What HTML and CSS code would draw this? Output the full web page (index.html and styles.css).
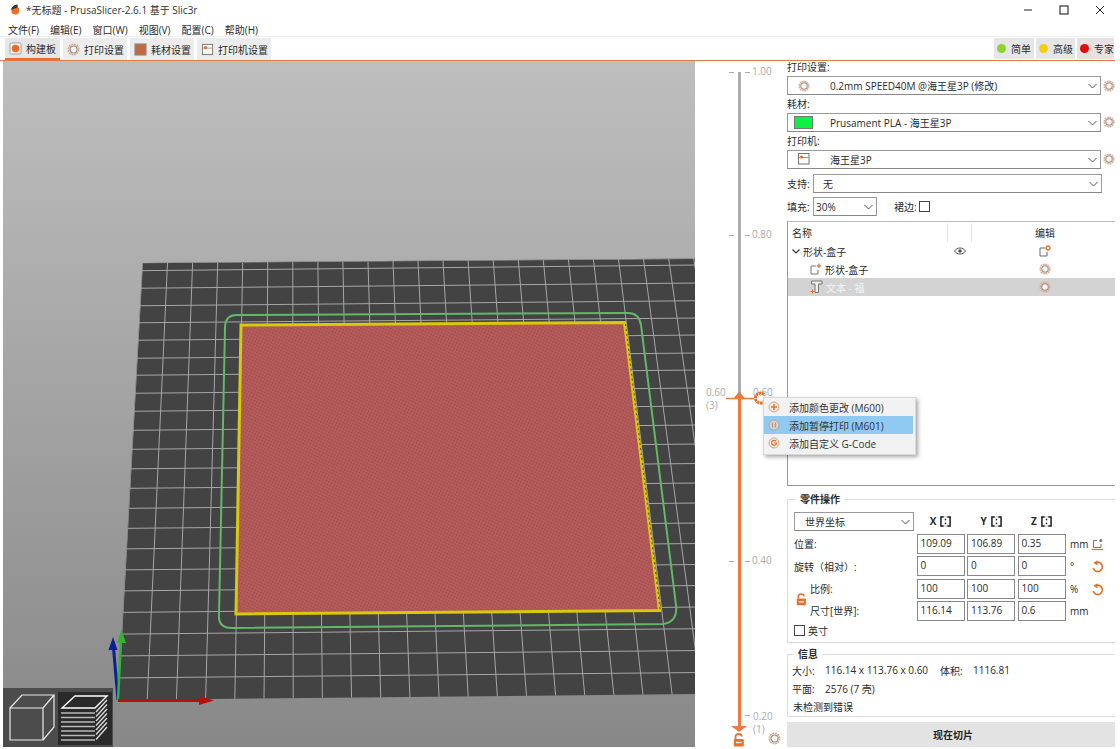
FILE: index.html
```html
<!DOCTYPE html>
<html lang="zh-CN">
<head>
<meta charset="utf-8">
<title>PrusaSlicer</title>
<link rel="stylesheet" href="styles.css">
</head>
<body>
<svg class="defs" width="0" height="0" aria-hidden="true">
  <defs>
    <symbol id="gear" viewBox="0 0 14 14">
      <circle cx="7" cy="7" r="5.600" fill="none" stroke="#e2ab8a" stroke-width="1.800" stroke-dasharray="2.200 0.700"/>
      <circle cx="7" cy="7" r="3.800" fill="#f4f4f4" stroke="#8f8f8f" stroke-width="1.200"/>
    </symbol>
    <symbol id="lock" viewBox="0 0 12 14">
      <path d="M2.500 6V3.600C2.500 2 3.800 1 5.400 1S8.600 2 8.600 3.600" fill="none" stroke="#e8702a" stroke-width="1.800"/>
      <rect x="0.800" y="6" width="10" height="7.400" rx="1" fill="#e8702a"/>
      <rect x="3" y="8.800" width="5.600" height="1.400" fill="#fff"/>
    </symbol>
    <symbol id="reset" viewBox="0 0 14 14">
      <path d="M4.500 3.200A5 5 0 1 1 2.400 8.600" fill="none" stroke="#e8702a" stroke-width="1.800"/>
      <path d="M7 0.200L7 6L2.600 3Z" fill="#e8702a"/>
    </symbol>
    <symbol id="bracket" viewBox="0 0 12 12">
      <rect x="1" y="1" width="10" height="10" fill="none" stroke="#bbb"/>
      <path d="M4 1H1V11H4M8 1H11V11H8" fill="none" stroke="#222" stroke-width="1.600"/>
      <rect x="5.200" y="3" width="1.600" height="1.800" fill="#222"/>
      <rect x="5.200" y="7.200" width="1.600" height="1.800" fill="#222"/>
    </symbol>
  </defs>
</svg>
<div class="app">
  <header class="titlebar">
    <svg class="logo" width="9" height="11" viewBox="0 0 9 11"><circle cx="4.300" cy="6.500" r="4" fill="#e8702a"/><path d="M6.500 0.500C3 0.800 0.500 2.800 0.300 6C2 4.800 5 4.500 6.800 3Z" fill="#333"/></svg>
    <span class="title">*无标题 - PrusaSlicer-2.6.1 基于 Slic3r</span>
    <div class="winbtns">
      <svg width="10" height="10" viewBox="0 0 10 10"><path d="M1 5H9" stroke="#222"/></svg>
      <svg width="10" height="10" viewBox="0 0 10 10"><rect x="1" y="1" width="8" height="8" fill="none" stroke="#222" stroke-width="1.100"/></svg>
      <svg width="10" height="10" viewBox="0 0 10 10"><path d="M1 1L9 9M9 1L1 9" stroke="#222"/></svg>
    </div>
  </header>
  <nav class="menubar">
    <span>文件(F)</span><span>编辑(E)</span><span>窗口(W)</span><span>视图(V)</span><span>配置(C)</span><span>帮助(H)</span>
  </nav>
  <div class="tabbar">
    <div class="tab active">
      <svg width="13" height="13" viewBox="0 0 14 14"><rect x="1" y="1" width="12" height="12" rx="1.500" fill="#f4f4f4" stroke="#999"/><circle cx="7" cy="7" r="4" fill="#ee6a24"/></svg>
      <span>构建板</span>
    </div>
    <div class="tab">
      <svg width="13" height="13"><use href="#gear"/></svg>
      <span>打印设置</span>
    </div>
    <div class="tab">
      <svg width="13" height="13" viewBox="0 0 14 14"><rect x="1" y="1" width="12" height="12" fill="#bd6c44" stroke="#8a8a8a"/></svg>
      <span>耗材设置</span>
    </div>
    <div class="tab">
      <svg width="13" height="13" viewBox="0 0 14 14"><rect x="1.500" y="1.500" width="11" height="11" fill="#fafafa" stroke="#777"/><path d="M2 5.500H12" stroke="#999"/><circle cx="4.800" cy="5" r="1.700" fill="#e8702a"/></svg>
      <span>打印机设置</span>
    </div>
    <div class="modes">
      <div class="mode"><i class="dot green"></i><span>简单</span></div>
      <div class="mode"><i class="dot yellow"></i><span>高级</span></div>
      <div class="mode current"><i class="dot red"></i><span>专家</span></div>
    </div>
  </div>
  <main class="main">
    <section class="canvas">
      <svg class="scene" width="692" height="686" viewBox="3 61 692 686">
        <defs>
          <linearGradient id="bg" x1="0" y1="0" x2="0" y2="1">
            <stop offset="0" stop-color="#bebebe"/>
            <stop offset="1" stop-color="#888"/>
          </linearGradient>
          <clipPath id="plateclip"><polygon points="142.500,263 700,258.500 700,694 118,700"/></clipPath>
          <pattern id="weave" width="3" height="3" patternUnits="userSpaceOnUse" patternTransform="rotate(25)">
            <rect width="3" height="3" fill="#b65c5b"/>
            <rect width="1.500" height="1.500" fill="#9c4c4c"/>
          </pattern>
        </defs>
        <rect x="3" y="61" width="692" height="686" fill="url(#bg)"/>
        <polygon points="142.500,263 700,258.500 700,694 118,700" fill="#434343"/>
        <g clip-path="url(#plateclip)" stroke="#a6a6a6" stroke-width="1" fill="none">
          <path d="M142.500 263L118 700M167.500 263L147.200 700M192.600 263L176.400 700M217.700 263L205.600 700M242.700 263L234.800 700M267.800 262L264 700M292.800 262L293.200 700M317.900 262L322.400 700M342.900 262L351.600 700M368 262L380.800 700M393 261L410 700M418 261L439.200 700M443 261L468.400 700M468 260L497.600 700M493.200 260L526.800 700M518.300 260L556 700M543.300 260L585.200 700M568.400 259L614.400 700M593.400 259L643.600 700M618.500 259L672.800 700M643.500 259L702 700M668.600 258L731.200 700M693.600 258L760.400 700"/>
          <path d="M110 263L700 258.500M110 271L700 265M110 288.500L700 283M110 306L700 300.700M110 323L700 318M110 340.500L700 335M110 358.500L700 353M110 375.500L700 370M110 393.500L700 388M110 411.500L700 406M110 430.500L700 425M110 449.500L700 444M110 469L700 463.500M110 488.500L700 483M110 508.500L700 503M110 528.500L700 523M110 549L700 543.500M110 570L700 564.500M110 591L700 585.500M110 612.500L700 607M110 634.200L700 628.700M110 656L700 650.500M110 678L700 672.500"/>
        </g>
        <path d="M237 315L628 313Q639 313 641 325L676 605Q678 622 663 624L232 628Q218 628 219 615L225 328Q225 315 237 315Z" fill="none" stroke="#63b768" stroke-width="2"/>
        <polygon points="241,325 624.500,322.500 659.500,610.500 236,614" fill="url(#weave)" stroke="#d8c90c" stroke-width="3" stroke-linejoin="miter"/>
        <path d="M625.500 324L660 609" stroke="#5c5410" stroke-width="1" stroke-dasharray="2 3"/>
        <path d="M118 700L113 642" stroke="#0b1f96" stroke-width="3"/>
        <polygon points="113,637 108.500,650 117.500,650" fill="#0b1f96"/>
        <path d="M118 700L121 638" stroke="#2fb52f" stroke-width="2.500"/>
        <polygon points="121.500,630 117,643 126,643" fill="#2fb52f"/>
        <path d="M118 700.500H205" stroke="#b50f0f" stroke-width="3"/>
        <polygon points="214,700.500 199,696 199,705" fill="#b50f0f"/>
        <rect x="2" y="688" width="111" height="59" fill="#4c4c4c"/>
        <rect x="58" y="692" width="54" height="53" fill="#2a2a2a"/>
        <g fill="none" stroke="#e8e8e8" stroke-width="1.200">
          <path d="M10 708H43V740H10ZM10 708L22 695H54L43 708M54 695V727L43 740"/>
          <path d="M62 708L75 696H107L95 708Z" stroke="#fff" stroke-width="1.400"/>
        </g>
        <path d="M61 713H95M61 717.500H95M61 722H95M61 726.500H95M61 731H95M61 735.500H95M61 740H95" stroke="#b8b8b8" stroke-width="1.400"/>
        <path d="M96 712L107 700M96 716.500L107 704.500M96 721L107 709M96 725.500L107 713.500M96 730L107 718M96 734.500L107 722.500M96 739.500L107 727" stroke="#dcdcdc" stroke-width="1.300"/>
      </svg>
    </section>
    <section class="slider">
      <div class="track grey"></div>
      <div class="track orange"></div>
      <span class="tick t100"></span><span class="tick t100 r"></span>
      <span class="tick t80"></span><span class="tick t80 r"></span>
      <span class="tick t40"></span><span class="tick t40 r"></span>
      <span class="tick t20"></span>
      <span class="val v100">1.00</span>
      <span class="val v80">0.80</span>
      <span class="val v60">0.60<br>(3)</span>
      <span class="val v60b">0.60</span>
      <span class="val v40">0.40</span>
      <span class="val v20">0.20<br>(1)</span>
      <svg class="thumb top" width="34" height="8" viewBox="0 0 34 8"><path d="M4 6.500H32M13 5.500L21.500 5.500L17.300 0.500Z" stroke="#ee7a3f" stroke-width="1.300" fill="#ee7a3f"/></svg>
      <svg class="addgear" width="14" height="14" viewBox="0 0 14 14"><path d="M11 3.500A5 5 0 1 0 11 10.500" fill="none" stroke="#e8702a" stroke-width="3" stroke-dasharray="2.500 0.600"/></svg>
      <svg class="thumb bottom" width="20" height="6" viewBox="0 0 20 6"><path d="M2 0H18L10 6Z" fill="#ee7a3f"/></svg>
      <svg class="slock" width="12" height="14"><use href="#lock"/></svg>
      <svg class="sgear" width="13" height="13"><use href="#gear"/></svg>
      <div class="ctx">
        <div class="ctx-item">
          <svg width="12" height="12" viewBox="0 0 12 12"><circle cx="6" cy="6" r="5" fill="#f4e7dc" stroke="#cfa78b"/><path d="M6 3V9M3 6H9" stroke="#e8702a" stroke-width="1.500"/></svg>
          <span>添加颜色更改 (M600)</span>
        </div>
        <div class="ctx-item hot">
          <svg width="12" height="12" viewBox="0 0 12 12"><circle cx="6" cy="6" r="5" fill="#cfd8df" stroke="#b0a79e"/><path d="M4.500 3.500V8.500M7.500 3.500V8.500" stroke="#d88a5c" stroke-width="1.300"/></svg>
          <span>添加暂停打印 (M601)</span>
        </div>
        <div class="ctx-item">
          <svg width="12" height="12" viewBox="0 0 12 12"><circle cx="6" cy="6" r="5" fill="#f4e7dc" stroke="#cfa78b"/><path d="M8 4.200A2.500 2.500 0 1 0 8.300 7V6H6.300" fill="none" stroke="#e8702a" stroke-width="1.200"/></svg>
          <span>添加自定义 G-Code</span>
        </div>
      </div>
    </section>
    <aside class="side">
      <div class="preset">
        <label class="plabel">打印设置:</label>
        <div class="prow">
          <div class="combo big">
            <span class="cicon"><svg width="12" height="12"><use href="#gear"/></svg></span>
            <span class="ctext">0.2mm SPEED40M @海王星3P (修改)</span>
            <svg class="chev" width="9" height="6" viewBox="0 0 9 6"><path d="M0.500 1L4.500 5L8.500 1" fill="none" stroke="#555"/></svg>
          </div>
          <svg width="12" height="12"><use href="#gear"/></svg>
        </div>
      </div>
      <div class="preset">
        <label class="plabel">耗材:</label>
        <div class="prow">
          <div class="combo big">
            <span class="cicon"><i class="swatch"></i></span>
            <span class="ctext">Prusament PLA - 海王星3P</span>
            <svg class="chev" width="9" height="6" viewBox="0 0 9 6"><path d="M0.500 1L4.500 5L8.500 1" fill="none" stroke="#555"/></svg>
          </div>
          <svg width="12" height="12"><use href="#gear"/></svg>
        </div>
      </div>
      <div class="preset">
        <label class="plabel">打印机:</label>
        <div class="prow">
          <div class="combo big">
            <span class="cicon"><svg width="12" height="12" viewBox="0 0 12 12"><rect x="0.500" y="0.500" width="10.500" height="10.500" fill="#fafafa" stroke="#777"/><path d="M1 4.500H11" stroke="#999"/><circle cx="3.500" cy="4" r="1.600" fill="#e8702a"/></svg></span>
            <span class="ctext">海王星3P</span>
            <svg class="chev" width="9" height="6" viewBox="0 0 9 6"><path d="M0.500 1L4.500 5L8.500 1" fill="none" stroke="#555"/></svg>
          </div>
          <svg width="12" height="12"><use href="#gear"/></svg>
        </div>
      </div>
      <div class="optrow support">
        <span class="optlabel">支持:</span>
        <div class="combo wide">
          <span class="ctext pad">无</span>
          <svg class="chev" width="9" height="6" viewBox="0 0 9 6"><path d="M0.500 1L4.500 5L8.500 1" fill="none" stroke="#555"/></svg>
        </div>
      </div>
      <div class="optrow fill">
        <span class="optlabel">填充:</span>
        <div class="combo small">
          <span class="ctext">30%</span>
          <svg class="chev" width="9" height="6" viewBox="0 0 9 6"><path d="M0.500 1L4.500 5L8.500 1" fill="none" stroke="#555"/></svg>
        </div>
        <span class="brim">裙边:</span>
        <i class="check"></i>
      </div>
      <div class="objlist">
        <div class="objhead">
          <span class="cname">名称</span><span class="ceye"></span><span class="cedit">编辑</span>
        </div>
        <div class="objrow">
          <span class="cname">
            <svg width="8" height="5" viewBox="0 0 8 5"><path d="M0.500 0.500L4 4L7.500 0.500" fill="none" stroke="#333" stroke-width="1.200"/></svg>
            <span>形状-盒子</span>
          </span>
          <span class="ceye"><svg width="12" height="8" viewBox="0 0 12 8"><path d="M0.500 4C3 0 9 0 11.500 4C9 8 3 8 0.500 4Z" fill="none" stroke="#555"/><circle cx="6" cy="4" r="1.800" fill="#555"/></svg></span>
          <span class="cedit"><svg width="12" height="12" viewBox="0 0 12 12"><path d="M6 3H1V11H8V7" fill="none" stroke="#666"/><circle cx="9" cy="3" r="2" fill="none" stroke="#e8702a" stroke-width="1.300"/></svg></span>
        </div>
        <div class="objrow child">
          <span class="cname">
            <svg width="12" height="12" viewBox="0 0 12 12"><path d="M6 3H1V11H8V7" fill="none" stroke="#777"/><path d="M9 0.500V5M6.800 2.800H11.200" stroke="#e8702a" stroke-width="1.200"/></svg>
            <span>形状-盒子</span>
          </span>
          <span class="ceye"></span>
          <span class="cedit"><svg width="12" height="12"><use href="#gear"/></svg></span>
        </div>
        <div class="objrow child sel">
          <span class="cname">
            <svg width="13" height="14" viewBox="0 0 13 14"><path d="M1.500 1H12V4H8.500V12.500H5V4H1.500Z" fill="#eee" stroke="#777"/><path d="M2.500 9.500V13.500M0.500 11.500H4.500" stroke="#e8702a"/></svg>
            <span>文本 - 福</span>
          </span>
          <span class="ceye"></span>
          <span class="cedit"><svg width="12" height="12"><use href="#gear"/></svg></span>
        </div>
      </div>
      <fieldset class="group manip">
        <legend>零件操作</legend>
        <div class="mgrid">
          <div class="combo coord">
            <span class="ctext pad2">世界坐标</span>
            <svg class="chev" width="9" height="6" viewBox="0 0 9 6"><path d="M0.500 1L4.500 5L8.500 1" fill="none" stroke="#555"/></svg>
          </div>
          <div class="axis"><b>X</b><svg width="11" height="11"><use href="#bracket"/></svg></div>
          <div class="axis"><b>Y</b><svg width="11" height="11"><use href="#bracket"/></svg></div>
          <div class="axis"><b>Z</b><svg width="11" height="11"><use href="#bracket"/></svg></div>
          <div></div>

          <span class="mlabel">位置:</span>
          <div class="inp">109.09</div><div class="inp">106.89</div><div class="inp">0.35</div>
          <div class="unit"><span>mm</span><svg width="13" height="13" viewBox="0 0 13 13"><path d="M6 2.500H2.500V9.500H10V6" fill="none" stroke="#777"/><circle cx="9.800" cy="2.500" r="1.500" fill="#777"/><path d="M0.500 11.500H12" stroke="#e8702a" stroke-width="1.200"/></svg></div>

          <span class="mlabel">旋转（相对）:</span>
          <div class="inp">0</div><div class="inp">0</div><div class="inp">0</div>
          <div class="unit"><span>°</span><svg width="13" height="13"><use href="#reset"/></svg></div>

          <div class="lockcell">
            <svg width="11" height="13"><use href="#lock"/></svg>
            <div class="locklabels"><span>比例:</span><span>尺寸[世界]:</span></div>
          </div>
          <div class="inp">100</div><div class="inp">100</div><div class="inp">100</div>
          <div class="unit"><span>%</span><svg width="13" height="13"><use href="#reset"/></svg></div>

          <div class="inp">116.14</div><div class="inp">113.76</div><div class="inp">0.6</div>
          <div class="unit"><span>mm</span></div>
        </div>
        <div class="inch"><i class="check"></i><span>英寸</span></div>
      </fieldset>
      <fieldset class="group info">
        <legend>信息</legend>
        <div class="irow r1"><span class="ik">大小:</span><span class="iv">116.14 x 113.76 x 0.60</span><span class="ik2">体积:</span><span>1116.81</span></div>
        <div class="irow r2"><span class="ik">平面:</span><span class="iv">2576 (7 壳)</span></div>
        <div class="irow r3"><span>未检测到错误</span></div>
      </fieldset>
      <button class="slice">现在切片</button>
    </aside>
  </main>
</div>
</body>
</html>
```
FILE: styles.css
```css
* { box-sizing: border-box; }
html, body { margin: 0; padding: 0; background: #fff; }
body {
  width: 1120px;
  height: 749px;
  overflow: hidden;
  font-family: "Open Sans", "Noto Sans CJK SC", sans-serif;
  font-size: 10px;
  color: #2a2a2a;
}
.defs { position: absolute; }
.app { width: 1115px; height: 747px; display: flex; flex-direction: column; }
svg { display: block; flex: none; }

.titlebar { height: 19px; display: flex; align-items: center; padding-left: 11px; }
.title { margin-left: 6px; font-size: 10px; color: #333; letter-spacing: 0; }
.winbtns { margin-left: auto; display: flex; gap: 26px; padding-right: 10px; }

.menubar { height: 18px; display: flex; align-items: center; padding: 4px 0 0 8px; gap: 11px; font-size: 10px; border-bottom: 1px solid #eee; }

.tabbar { height: 24px; display: flex; padding: 1px 1px 0 5px; gap: 3px; border-bottom: 1px solid #e07a45; }
.tab { height: 22px; background: #ececec; display: flex; align-items: center; gap: 4px; padding-left: 4px; font-size: 10px; white-space: nowrap; }
.tab:nth-child(1) { width: 55px; }
.tab:nth-child(2) { width: 64px; }
.tab:nth-child(3) { width: 64px; }
.tab:nth-child(4) { width: 74px; }
.tab.active { background: #e6e6e6; border-bottom: 2px solid #e8702a; }
.modes { margin-left: auto; display: flex; gap: 2px; }
.mode { width: 39px; height: 21px; background: #e6e6e6; display: flex; align-items: center; gap: 5px; padding-left: 3px; white-space: nowrap; }
.mode:first-child { width: 40px; }
.mode.current { background: #e9e1e1; width: 37px; }
.dot { width: 9px; height: 9px; border-radius: 50%; display: block; }
.dot.green { background: #8ad62f; }
.dot.yellow { background: #f3cd0e; }
.dot.red { background: #e30b0b; }

.main { flex: 1; display: flex; min-height: 0; }
.canvas { width: 695px; padding-left: 3px; overflow: hidden; flex: none; }
.scene { display: block; }

.slider { width: 92px; flex: none; position: relative; color: #aaa; }
.track { position: absolute; left: 43px; width: 3px; }
.track.grey { top: 11px; height: 325px; background: #adadad; }
.track.orange { top: 336px; height: 330px; background: #ee7a3f; width: 2.500px; }
.tick { position: absolute; width: 5px; height: 1px; background: #aaa; left: 34px; }
.tick.r { left: 50px; }
.t100 { top: 11px; }
.t80 { top: 174px; }
.t40 { top: 500px; }
.t20 { top: 654px; left: 50px; }
.val { position: absolute; font-size: 10px; line-height: 13px; }
.v100 { left: 57px; top: 4px; }
.v80 { left: 57px; top: 167px; }
.v60 { left: 11px; top: 325px; }
.v60b { left: 58px; top: 325px; }
.v40 { left: 57px; top: 493px; }
.v20 { left: 58px; top: 649px; }
.thumb.top { position: absolute; left: 27px; top: 331px; }
.thumb.bottom { position: absolute; left: 34px; top: 665px; }
.addgear { position: absolute; left: 58px; top: 330px; }
.slock { position: absolute; left: 38px; top: 672px; }
.sgear { position: absolute; left: 73px; top: 671px; }

.ctx { position: absolute; left: 68px; top: 336px; width: 153px; height: 58px; background: #f2f2f2; border: 1px solid #d8d8d8; box-shadow: 2px 2px 4px rgba(0,0,0,0.35); z-index: 3; color: #333; }
.ctx-item { height: 18px; margin-right: 2px; display: flex; align-items: center; gap: 9px; padding-left: 4px; font-size: 10px; }
.ctx-item.hot { background: #90c9f2; }

.side { width: 328px; flex: none; display: flex; flex-direction: column; }
.preset { height: 37px; }
.plabel { display: block; height: 15px; line-height: 13px; font-size: 10px; }
.prow { display: flex; align-items: center; gap: 2px; }
.combo { height: 19px; display: flex; align-items: center; background: #fff; border: 1px solid #9a9a9a; border-bottom-color: #888; position: relative; font-size: 10px; }
.combo.big { width: 315px; }
.cicon { width: 31px; display: flex; justify-content: center; flex: none; }
.swatch { display: block; width: 19px; height: 13px; background: #0cf242; border: 1px solid #777; }
.ctext { margin-left: 11px; white-space: nowrap; }
.chev { position: absolute; right: 3px; top: 6px; }
.optrow { display: flex; align-items: center; }
.optlabel { width: 26px; }
.support { margin-top: 3px; }
.combo.wide { width: 289px; }
.ctext.pad { margin-left: 9px; }
.fill { margin-top: 4px; }
.combo.small { width: 64px; }
.combo.small .ctext { margin-left: 2px; }
.brim { margin-left: 17px; width: 25px; }
.check { display: block; width: 11px; height: 11px; border: 1px solid #444; background: #fff; }

.objlist { margin-top: 5px; height: 266px; border: 1px solid #999; border-width: 1px 0 1px 1px; border-top-color: #bbb; }
.objhead { height: 20px; display: flex; align-items: center; }
.objhead .ceye { border-left: 1px solid #e6e6e6; border-right: 1px solid #e6e6e6; height: 19px; }
.objrow { height: 18px; display: flex; align-items: center; }
.cname { width: 159px; display: flex; align-items: center; gap: 3px; padding-left: 4px; }
.ceye { width: 25px; display: flex; justify-content: center; }
.cedit { flex: 1; display: flex; justify-content: center; padding-left: 3px; }
.child .cname { padding-left: 22px; gap: 3px; }
.sel { background: #d3d3d3; }
.sel .cname span { color: #f3f3f3; }

.group { margin: 0; padding: 0; min-width: 0; border: 1px solid #dcdcdc; border-width: 1px 0 1px 1px; }
.group legend { font-weight: 700; font-size: 10px; padding: 0 4px; margin-left: 2px; line-height: 13px; }
.manip { margin-top: 7px; height: 151px; padding-left: 6px; }
.mgrid { display: grid; grid-template-columns: 120px 48px 48px 48px 1fr; column-gap: 2.500px; row-gap: 2.500px; grid-auto-rows: 20px; align-items: center; margin-top: 5px; }
.combo.coord { width: 120px; }
.combo.coord .ctext { margin-left: 10px; }
.axis { display: flex; align-items: center; justify-content: center; gap: 4px; font-size: 10px; }
.axis b { font-weight: 700; }
.inp { height: 20px; border: 1px solid #888; padding-left: 3px; line-height: 16px; background: #fff; }
.unit { display: flex; align-items: center; padding-left: 2px; position: relative; }
.unit svg { position: absolute; left: 23px; top: 1px; }
.lockcell { grid-row: span 2; height: 42.500px; align-self: start; display: flex; align-items: center; gap: 3px; padding-left: 2px; white-space: nowrap; }
.locklabels { height: 100%; display: flex; flex-direction: column; justify-content: space-between; }
.locklabels span { line-height: 20px; }
.inch { display: flex; align-items: center; gap: 3px; margin-top: 2px; }

.info { margin-top: 5px; height: 69px; padding-left: 4px; }
.irow { display: flex; height: 18px; align-items: center; }
.ik { width: 33px; }
.iv { width: 115px; }
.ik2 { width: 33px; }
.r3 { padding-left: 1px; }

.slice { margin: 5px 0 0; height: 25px; width: 328px; background: #e3e3e3; border: 0; font: 700 10px "Open Sans", "Noto Sans CJK SC", sans-serif; color: #222; padding: 0 0 0 4px; }
```
